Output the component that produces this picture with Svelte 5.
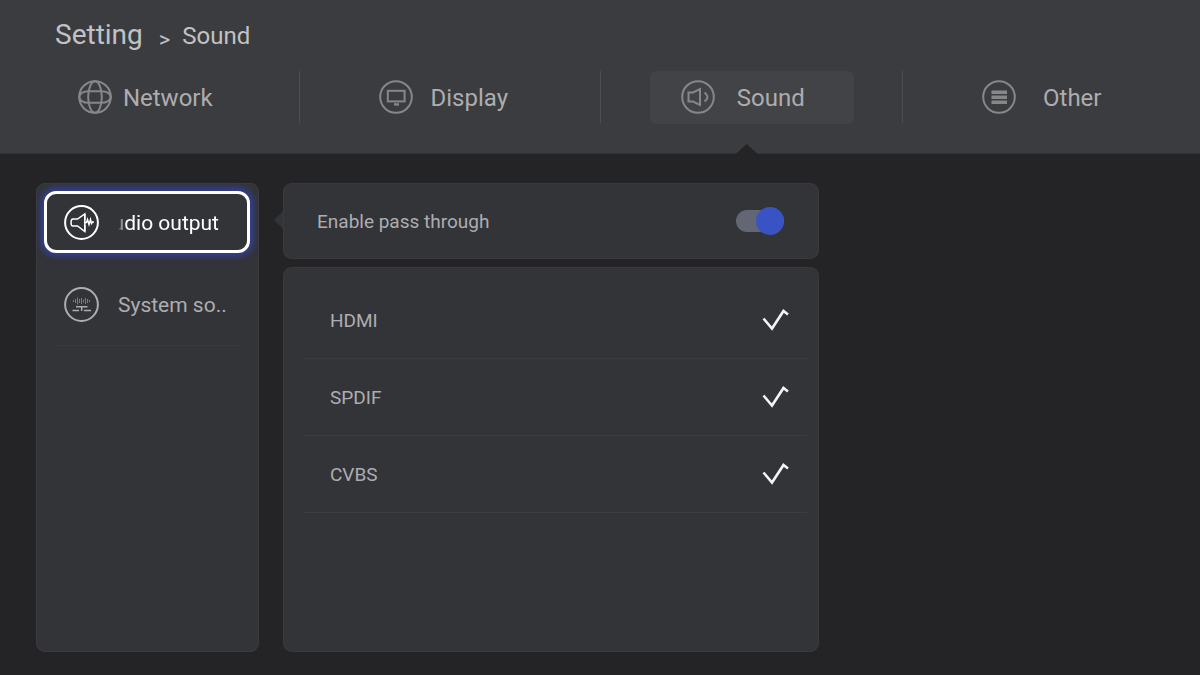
<script>
  const tabs = [
    { id: 'network', name: 'Network' },
    { id: 'display', name: 'Display' },
    { id: 'sound', name: 'Sound' },
    { id: 'other', name: 'Other' }
  ];

  const menu = [
    { id: 'output', name: 'Audio output' },
    { id: 'system', name: 'System so..' }
  ];

  let outputs = [
    { name: 'HDMI', enabled: true },
    { name: 'SPDIF', enabled: true },
    { name: 'CVBS', enabled: true }
  ];

  let activeTab = 'sound';
  let activeItem = 'output';
  let passThrough = true;
</script>

<div class="page">
  <header>
    <div class="breadcrumb">
      <h1>Setting</h1>
      <span class="arrow">&gt;</span>
      <span class="current">Sound</span>
    </div>
    <nav>
      {#each tabs as tab (tab.id)}
        <div class="tab" class:active={activeTab === tab.id}>
          <button on:click={() => activeTab = tab.id}>
            <svg class="tab-icon" viewBox="0 0 34 34" aria-hidden="true">
              <circle cx="17" cy="17" r="15.8" />
              {#if tab.id === 'network'}
                <ellipse cx="17" cy="17" rx="6.8" ry="15.8" />
                <path d="M1.2 17Q2 11.2 11 11.2H23Q32 11.2 32.8 17Q32 22.8 23 22.8H11Q2 22.8 1.2 17Z" />
              {:else if tab.id === 'display'}
                <rect x="8.8" y="10.8" width="16.8" height="10.6" />
                <path d="M15 24.4H20" stroke-width="2.4" />
              {:else if tab.id === 'sound'}
                <path d="M7.5 12.5H12L19 9V25L12 21.5H7.5ZM23.5 12.5Q29.5 17 23.5 21.5" />
              {:else}
                <path d="M9.5 12.2H25M9.5 17.2H25M9.5 22.2H25" stroke-width="3.4" />
              {/if}
            </svg>
            <span>{tab.name}</span>
          </button>
        </div>
      {/each}
    </nav>
  </header>

  <main>
    <ul class="menu panel">
      {#each menu as item (item.id)}
        <li>
          <button class:focused={activeItem === item.id} on:click={() => activeItem = item.id}>
            <svg class="menu-icon" viewBox="0 0 35 35" aria-hidden="true">
              <circle cx="17.5" cy="17.5" r="16.4" stroke-width="2" />
              {#if item.id === 'output'}
                <path d="M20.8 15V9L13.5 14H9Q7 14 7 17.5T9 21H13.5L20.8 26.5V20" />
                <path d="M20.8 9V26.5M21 17.5H22.5L23.5 14.5L25 19.5L26.5 14.5L27.5 18.5L28.5 17H30" />
              {:else}
                <path class="faint" d="M9.5 13V15M11.5 12V16M13.5 10.5V17.5M15.5 12V16M17.5 11V17M19.5 12.5V15.5M21.5 11V17M23.5 12V16M25.5 13V15" stroke-width="1" />
                <path d="M12 19.8H23.5M8.5 23.5H15M20 23.5H27M17.7 20V24" />
              {/if}
            </svg>
            <span class="menu-name">{item.name}</span>
          </button>
        </li>
      {/each}
    </ul>

    <section>
      <label class="switch-row panel">
        <span>Enable pass through</span>
        <input class="switch" type="checkbox" role="switch" bind:checked={passThrough} />
      </label>

      <ul class="outputs panel">
        {#each outputs as output (output.name)}
          <li>
            <label>
              <span>{output.name}</span>
              <input class="check" type="checkbox" bind:checked={output.enabled} />
              <svg viewBox="0 0 28 22" aria-hidden="true">
                <path d="M1.5 9.5L10 19.5L21.5 2L26 5.5" />
              </svg>
            </label>
          </li>
        {/each}
      </ul>
    </section>
  </main>
</div>

<style>
  :global(body) {
    background: #242426;
  }
  .page {
    min-height: 100vh;
    display: flex;
    flex-direction: column;
    overflow: hidden;
    font-family: Roboto, 'Liberation Sans', sans-serif;
    color: #adadb0;
  }
  h1, ul {
    margin: 0;
    padding: 0;
    font-weight: 400;
    list-style: none;
  }
  button {
    display: flex;
    align-items: center;
    border: none;
    background: none;
    color: inherit;
    font-family: inherit;
    cursor: pointer;
  }
  svg {
    flex: none;
    fill: none;
    stroke: currentColor;
  }

  header {
    background: #3b3c3f;
    box-shadow: inset 0 -1px #333336;
  }
  .breadcrumb {
    display: flex;
    align-items: baseline;
    gap: 12px;
    padding: 19px 55px 0;
    height: 54px;
    box-sizing: border-box;
    line-height: 32px;
    color: #c2c2c4;
  }
  h1 {
    font-size: 28px;
  }
  .arrow {
    margin-left: 4px;
    align-self: flex-end;
    font-size: 22px;
    line-height: 28px;
  }
  .current {
    font-size: 24px;
  }

  nav {
    display: grid;
    grid-template-columns: repeat(4, 1fr);
    margin: 17px -4px 0 -2px;
  }
  .tab {
    position: relative;
    display: flex;
    justify-content: center;
    padding-bottom: 30px;
  }
  .tab:not(:last-child)::after {
    content: '';
    position: absolute;
    top: 0;
    right: 0;
    width: 1px;
    height: 52px;
    background: #4e4e52;
  }
  .tab button {
    width: 204px;
    height: 53px;
    padding: 0 27px 0 31px;
    border-radius: 6px;
    font-size: 24px;
  }
  .tab span {
    flex: 1;
    text-align: center;
  }
  .active button {
    background: #424346;
  }
  /* notch pointing at the open tab */
  .active::before {
    content: '';
    position: absolute;
    bottom: 0;
    left: calc(50% - 16px);
    width: 22px;
    height: 10px;
    background: #242426;
    clip-path: polygon(50% 0, 100% 100%, 0 100%);
  }
  .tab-icon {
    width: 34px;
    height: 34px;
    margin-bottom: 2px;
    color: #87878a;
    stroke-width: 2;
  }

  main {
    flex: 1;
    display: grid;
    grid-template-columns: 223fr 536fr 321fr;
    gap: 24px;
    padding: 29px 36px 23px;
  }
  .panel {
    background: #333438;
    border-radius: 9px;
    box-shadow: inset 0 0 0 1px #3a3a3e;
  }

  .menu li {
    padding: 8px 9px 12px 8px;
  }
  .menu li:last-child::after {
    content: '';
    display: block;
    margin: 10px 12px 0;
    border-bottom: 1px solid #3a3a3e;
  }
  .menu button {
    width: 100%;
    height: 62px;
    gap: 19px;
    padding: 0 17px;
    border: 3px solid transparent;
    border-radius: 12px;
    font-size: 21px;
    white-space: nowrap;
  }
  .menu .focused {
    border-color: #fff;
    color: #fff;
    box-shadow: 0 0 6px 3px #3340a0;
  }
  .menu-icon {
    width: 35px;
    height: 35px;
    stroke-width: 1.5;
  }
  .menu-name {
    line-height: 28px;
    padding-top: 2px;
  }
  .faint {
    opacity: 0.6;
  }
  .focused .menu-name {
    display: flex;
    justify-content: flex-end;
    width: 101px;
    overflow: hidden;
    mask-image: linear-gradient(to right, transparent, #000 8px);
  }

  section {
    display: flex;
    flex-direction: column;
    gap: 8px;
  }
  .switch-row {
    position: relative;
    display: flex;
    align-items: center;
    justify-content: space-between;
    height: 76px;
    padding: 0 35px 0 34px;
    font-size: 19px;
  }
  .switch-row::before {
    content: '';
    position: absolute;
    top: 28px;
    left: -9px;
    width: 9px;
    height: 18px;
    background: #333438;
    clip-path: polygon(0 50%, 100% 0, 100% 100%);
  }
  .switch {
    appearance: none;
    display: flex;
    align-items: center;
    width: 48px;
    height: 22px;
    margin: 0;
    border-radius: 11px;
    background: #636675;
  }
  .switch::before {
    content: '';
    width: 28px;
    height: 28px;
    flex: none;
    border-radius: 50%;
    background: #8a8b94;
  }
  .switch:checked {
    justify-content: flex-end;
  }
  .switch:checked::before {
    background: #3a53c4;
  }

  .outputs {
    flex: 1;
    padding: 15px 12px 14px 20px;
  }
  .outputs label {
    display: flex;
    align-items: center;
    height: 76px;
    padding: 0 17px 0 27px;
    border-bottom: 1px solid #3d3d41;
    font-size: 19px;
  }
  .outputs span {
    flex: 1;
  }
  .check {
    appearance: none;
    margin: 0;
  }
  .outputs svg {
    width: 28px;
    height: 22px;
    color: #f4f4f4;
    stroke-width: 2.6;
    visibility: hidden;
  }
  .check:checked + svg {
    visibility: visible;
  }
</style>
